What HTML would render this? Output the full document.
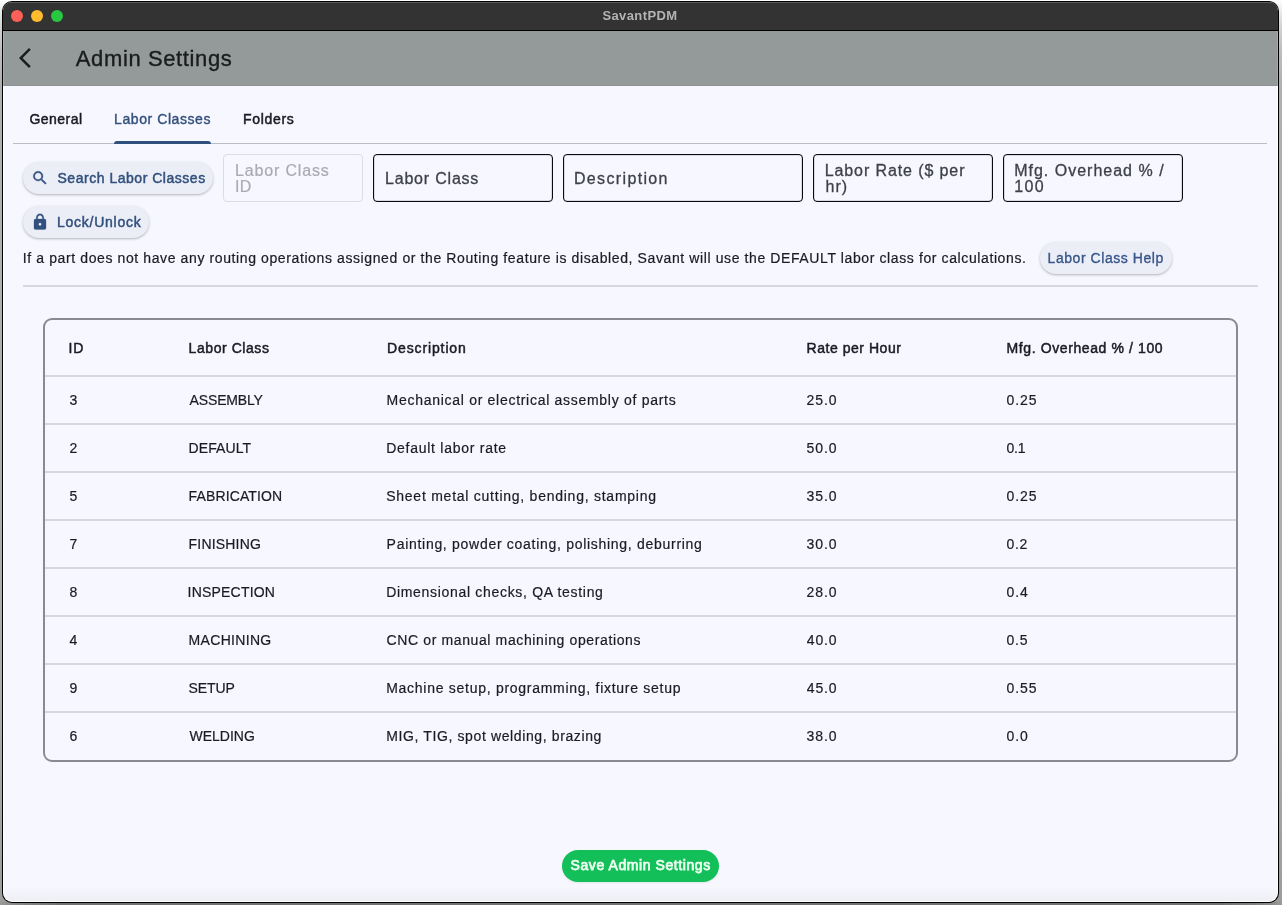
<!DOCTYPE html>
<html lang="en">
<head>
<meta charset="utf-8">
<title>SavantPDM - Admin Settings</title>
<style>
*{box-sizing:border-box;margin:0;padding:0}
html,body{width:1282px;height:905px;overflow:hidden}
body{position:relative;font-family:"Liberation Sans",Arial,sans-serif;color:#1a1c20;
  background:linear-gradient(to bottom,#ffffff 0px,#ececec 10px,#d4d4d4 25px,#bebebe 50px,#b0b0b0 85px,#adadad 700px,#9c9c9c 905px)}
#win{position:absolute;left:2px;top:1px;width:1277px;height:902px;border-radius:10px;background:#000;overflow:hidden}
#inner{position:absolute;left:1px;top:1px;right:1px;bottom:1px;border-radius:9px;background:#fff;overflow:hidden}
#titlebar{position:absolute;left:0;top:0;right:0;height:28px;background:#333333;border-top:1px solid #5a5a5a}
#tbline{position:absolute;left:0;right:0;top:28px;height:1px;background:#000}
.dot{position:absolute;top:7px;width:12px;height:12px;border-radius:50%}
#appbar{position:absolute;left:0;right:0;top:29px;height:55px;background:#949a99;box-shadow:inset 0 -1px 0 rgba(0,0,0,.05),inset 1px 0 0 rgba(255,255,255,.18),inset -1px 0 0 rgba(255,255,255,.18)}
#content{position:absolute;left:1px;right:1px;top:84px;bottom:1px;background:linear-gradient(to bottom,rgba(238,239,244,0) calc(100% - 14px),#eeeff4 100%),#f7f7ff;border-radius:0 0 8px 8px}
.abs{position:absolute}
.t{position:absolute;white-space:pre;line-height:1em;color:#1a1c20;font-weight:400;-webkit-text-stroke:0.2px currentColor}
.b{font-weight:700;-webkit-text-stroke:0}
.m{-webkit-text-stroke:0.48px currentColor}
.sb{-webkit-text-stroke:0.47px currentColor}
.ttl{color:#b4b4b4}
.adm{color:#1a1c1c;-webkit-text-stroke:0.35px currentColor}
.pri{color:#33507c;-webkit-text-stroke:0.38px currentColor}
.btx{color:#31507d}
.wht{color:#ecfff1;-webkit-text-stroke:0.75px currentColor}
.dis{color:#a9abb2}
.fld{color:#3f4149;-webkit-text-stroke:0.3px currentColor}
.hr{position:absolute;height:2px;background:#d6d7e0}
.btn{position:absolute;height:32px;border-radius:16px;background:#eceef7;border:0;
  box-shadow:0 1px 2px rgba(0,0,20,.20),0 1px 3px 1px rgba(0,0,20,.06);font:inherit;display:block}
.btn svg{position:absolute}
.field{position:absolute;top:154px;height:48px;border:1px solid #0a0a10;border-radius:4px;box-shadow:inset 0 0 0 0.5px rgba(10,10,16,.25)}
.field.disabled{border:1px solid #dcdce2;box-shadow:none}
#save{background:#13bf59;box-shadow:0 1px 2px rgba(0,0,20,.08)}
#tbl{position:absolute;left:43px;top:318px;width:1195px;height:444px;border:2px solid #8a8a90;border-radius:9px;overflow:hidden}
#tbl table{border-collapse:collapse;table-layout:fixed;width:1191px}
#tbl th{height:56px;font-weight:400}
#tbl td{height:48px}
#tbl tbody tr{background:linear-gradient(to bottom,#d6d7e0 0,#d6d7e0 1px,transparent 1px,transparent 47px,#d6d7e0 47px)}
#tbl tbody tr:last-child{background:linear-gradient(to bottom,#d6d7e0 0,#d6d7e0 1px,transparent 1px)}
#tbl thead tr{background:linear-gradient(to top,#d6d7e0 0,#d6d7e0 1px,transparent 1px)}
#ind{position:absolute;left:114px;top:140.6px;width:97px;height:3.4px;background:#2f4f7f;border-radius:3px 3px 0 0}
#page{position:absolute;left:0;top:0;width:1282px;height:905px;will-change:transform}
.hlp{color:#38568a;-webkit-text-stroke:0.35px currentColor}
#under{position:absolute;left:0;top:902px;width:1282px;height:3px;background:linear-gradient(to right,#9a9a9a 0,#8a8a8a 12px,#727272 60px,#727272 1222px,#8a8a8a 1270px,#9a9a9a 1282px)}

</style>
</head>
<body>
<div id="page">
<div id="under"></div>
<div id="win"><div id="inner">
  <div id="titlebar">
    <span class="dot" style="left:8px;background:#fe5f57"></span>
    <span class="dot" style="left:28px;background:#febc2e"></span>
    <span class="dot" style="left:48px;background:#28c840"></span>
    <span id="tt" class="t b ttl" style="left:599.40px;top:6.10px;font-size:13px;letter-spacing:0.400px">SavantPDM</span>
  </div>
  <div id="tbline"></div>
  <header id="appbar">
    <svg class="abs" style="left:10px;top:15px" width="24" height="24" viewBox="0 0 24 24"><path fill="#1a1c1c" d="M17.77 3.77L16 2 6 12l10 10 1.77-1.77L9.54 12z"/></svg>
    <h1><span id="adm" class="t adm" style="left:72.80px;top:16.98px;font-size:22px;letter-spacing:0.615px">Admin Settings</span></h1>
  </header>
  <div id="content"></div>
</div></div>

<!-- everything below is positioned in page coordinates -->

<nav>
  <span id="tab1" class="t m" style="left:29.50px;top:112.40px;font-size:14px;letter-spacing:0.453px">General</span><span id="tab2" class="t m pri" style="left:114.10px;top:112.40px;font-size:14px;letter-spacing:0.573px">Labor Classes</span><span id="tab3" class="t m" style="left:243.10px;top:112.40px;font-size:14px;letter-spacing:0.667px">Folders</span>
  <div class="hr" style="left:13px;top:143px;width:1254px;height:1px;background:#bcbcc5"></div>
  <div id="ind"></div>
</nav>

<main>
  <button class="btn" id="search" style="left:23px;top:162px;width:190px">
    <svg style="left:8px;top:7px" width="18" height="18" viewBox="0 0 24 24"><path fill="#31507d" stroke="#31507d" stroke-width="0.45" d="M15.5 14h-.79l-.28-.27A6.471 6.471 0 0 0 16 9.500 6.500 6.500 0 1 0 9.500 16c1.610 0 3.090-.59 4.230-1.570l.27.28v.79l5 4.990L20.490 19l-4.990-5zm-6 0C7.010 14 5 11.990 5 9.500S7.010 5 9.500 5 14 7.010 14 9.500 11.990 14 9.500 14z"/></svg>
    <span id="bsearch" class="t sb btx" style="left:34.50px;top:9.15px;font-size:14px;letter-spacing:0.522px">Search Labor Classes</span>
  </button>
  <div class="field disabled" style="left:223px;width:140px"><span id="f0a" class="t dis" style="left:11.00px;top:8.46px;font-size:16px;letter-spacing:0.848px">Labor Class</span><span id="f0b" class="t dis" style="left:11.00px;top:24.46px;font-size:16px;letter-spacing:0.320px">ID</span></div>
  <div class="field" style="left:373px;width:180px"><span id="f1" class="t fld" style="left:11.00px;top:16.46px;font-size:16px;letter-spacing:0.800px">Labor Class</span></div>
  <div class="field" style="left:563px;width:240px"><span id="f2" class="t fld" style="left:9.90px;top:16.46px;font-size:16px;letter-spacing:1.360px">Description</span></div>
  <div class="field" style="left:813px;width:180px"><span id="f3a" class="t fld" style="left:10.70px;top:8.46px;font-size:16px;letter-spacing:0.900px">Labor Rate ($ per</span><span id="f3b" class="t fld" style="left:11.50px;top:24.46px;font-size:16px;letter-spacing:1.040px">hr)</span></div>
  <div class="field" style="left:1003px;width:180px"><span id="f4a" class="t fld" style="left:10.20px;top:8.46px;font-size:16px;letter-spacing:1.000px">Mfg. Overhead % /</span><span id="f4b" class="t fld" style="left:10.20px;top:24.46px;font-size:16px;letter-spacing:1.440px">100</span></div>

  <button class="btn" id="lock" style="left:23px;top:206px;width:126px">
    <svg style="left:8px;top:7px" width="18" height="18" viewBox="0 0 24 24"><path fill="#31507d" stroke="#31507d" stroke-width="0.4" d="M18 8h-1V6c0-2.760-2.240-5-5-5S7 3.240 7 6v2H6c-1.100 0-2 .9-2 2v10c0 1.100.9 2 2 2h12c1.100 0 2-.9 2-2V10c0-1.100-.9-2-2-2zm-6 9c-1.100 0-2-.9-2-2s.9-2 2-2 2 .9 2 2-.9 2-2 2zm3.100-9H8.900V6c0-1.710 1.390-3.100 3.100-3.100 1.710 0 3.100 1.390 3.100 3.100v2z"/></svg>
    <span id="block" class="t sb btx" style="left:34.00px;top:9.15px;font-size:14px;letter-spacing:0.752px">Lock/Unlock</span>
  </button>

  <p><span id="info" class="t" style="left:22.80px;top:251.35px;font-size:14px;letter-spacing:0.608px">If a part does not have any routing operations assigned or the Routing feature is disabled, Savant will use the DEFAULT labor class for calculations.</span></p>
  <button class="btn" id="help" style="left:1040px;top:242px;width:132px"><span id="bhelp" class="t hlp" style="left:7.60px;top:9.15px;font-size:14px;letter-spacing:0.549px">Labor Class Help</span></button>
  <div class="hr" style="left:23px;top:285px;width:1235px"></div>

  <div id="tbl">
    <table>
      <colgroup><col style="width:119px"><col style="width:199px"><col style="width:420px"><col style="width:200px"><col></colgroup>
      <thead><tr><th><span id="h0" class="t m" style="left:23.50px;top:21.40px;font-size:14px;letter-spacing:0.800px">ID</span></th><th><span id="h1" class="t m" style="left:143.60px;top:21.40px;font-size:14px;letter-spacing:0.560px">Labor Class</span></th><th><span id="h2" class="t m" style="left:342.00px;top:21.40px;font-size:14px;letter-spacing:0.880px">Description</span></th><th><span id="h3" class="t m" style="left:761.60px;top:21.40px;font-size:14px;letter-spacing:0.533px">Rate per Hour</span></th><th><span id="h4" class="t m" style="left:961.60px;top:21.40px;font-size:14px;letter-spacing:0.600px">Mfg. Overhead % / 100</span></th></tr></thead>
      <tbody>
<tr><td><span id="r0c0" class="t" style="left:24.60px;top:73.15px;font-size:14px;letter-spacing:0.250px">3</span></td><td><span id="r0c1" class="t" style="left:144.60px;top:73.15px;font-size:14px;letter-spacing:-0.160px">ASSEMBLY</span></td><td><span id="r0c2" class="t" style="left:341.60px;top:73.15px;font-size:14px;letter-spacing:0.712px">Mechanical or electrical assembly of parts</span></td><td><span id="r0c3" class="t" style="left:761.60px;top:73.15px;font-size:14px;letter-spacing:0.907px">25.0</span></td><td><span id="r0c4" class="t" style="left:961.60px;top:73.15px;font-size:14px;letter-spacing:0.880px">0.25</span></td></tr>
<tr><td><span id="r1c0" class="t" style="left:24.60px;top:121.15px;font-size:14px;letter-spacing:0.250px">2</span></td><td><span id="r1c1" class="t" style="left:143.60px;top:121.15px;font-size:14px;letter-spacing:0.080px">DEFAULT</span></td><td><span id="r1c2" class="t" style="left:341.20px;top:121.15px;font-size:14px;letter-spacing:0.734px">Default labor rate</span></td><td><span id="r1c3" class="t" style="left:761.60px;top:121.15px;font-size:14px;letter-spacing:0.907px">50.0</span></td><td><span id="r1c4" class="t" style="left:961.60px;top:121.15px;font-size:14px;letter-spacing:-0.300px">0.1</span></td></tr>
<tr><td><span id="r2c0" class="t" style="left:24.60px;top:169.15px;font-size:14px;letter-spacing:0.250px">5</span></td><td><span id="r2c1" class="t" style="left:143.60px;top:169.15px;font-size:14px;letter-spacing:0.128px">FABRICATION</span></td><td><span id="r2c2" class="t" style="left:341.20px;top:169.15px;font-size:14px;letter-spacing:0.752px">Sheet metal cutting, bending, stamping</span></td><td><span id="r2c3" class="t" style="left:761.60px;top:169.15px;font-size:14px;letter-spacing:0.907px">35.0</span></td><td><span id="r2c4" class="t" style="left:961.60px;top:169.15px;font-size:14px;letter-spacing:0.880px">0.25</span></td></tr>
<tr><td><span id="r3c0" class="t" style="left:24.60px;top:217.15px;font-size:14px;letter-spacing:0.250px">7</span></td><td><span id="r3c1" class="t" style="left:143.60px;top:217.15px;font-size:14px;letter-spacing:0.180px">FINISHING</span></td><td><span id="r3c2" class="t" style="left:341.60px;top:217.15px;font-size:14px;letter-spacing:0.711px">Painting, powder coating, polishing, deburring</span></td><td><span id="r3c3" class="t" style="left:761.60px;top:217.15px;font-size:14px;letter-spacing:0.907px">30.0</span></td><td><span id="r3c4" class="t" style="left:961.60px;top:217.15px;font-size:14px;letter-spacing:0.560px">0.2</span></td></tr>
<tr><td><span id="r4c0" class="t" style="left:24.60px;top:265.15px;font-size:14px;letter-spacing:0.250px">8</span></td><td><span id="r4c1" class="t" style="left:142.60px;top:265.15px;font-size:14px;letter-spacing:0.196px">INSPECTION</span></td><td><span id="r4c2" class="t" style="left:341.20px;top:265.15px;font-size:14px;letter-spacing:0.684px">Dimensional checks, QA testing</span></td><td><span id="r4c3" class="t" style="left:761.60px;top:265.15px;font-size:14px;letter-spacing:0.907px">28.0</span></td><td><span id="r4c4" class="t" style="left:961.60px;top:265.15px;font-size:14px;letter-spacing:0.920px">0.4</span></td></tr>
<tr><td><span id="r5c0" class="t" style="left:24.60px;top:313.15px;font-size:14px;letter-spacing:0.250px">4</span></td><td><span id="r5c1" class="t" style="left:143.60px;top:313.15px;font-size:14px;letter-spacing:0.320px">MACHINING</span></td><td><span id="r5c2" class="t" style="left:341.60px;top:313.15px;font-size:14px;letter-spacing:0.618px">CNC or manual machining operations</span></td><td><span id="r5c3" class="t" style="left:761.80px;top:313.15px;font-size:14px;letter-spacing:0.827px">40.0</span></td><td><span id="r5c4" class="t" style="left:961.60px;top:313.15px;font-size:14px;letter-spacing:0.680px">0.5</span></td></tr>
<tr><td><span id="r6c0" class="t" style="left:24.60px;top:361.15px;font-size:14px;letter-spacing:0.250px">9</span></td><td><span id="r6c1" class="t" style="left:143.60px;top:361.15px;font-size:14px;letter-spacing:-0.080px">SETUP</span></td><td><span id="r6c2" class="t" style="left:341.20px;top:361.15px;font-size:14px;letter-spacing:0.724px">Machine setup, programming, fixture setup</span></td><td><span id="r6c3" class="t" style="left:761.80px;top:361.15px;font-size:14px;letter-spacing:0.827px">45.0</span></td><td><span id="r6c4" class="t" style="left:961.60px;top:361.15px;font-size:14px;letter-spacing:0.880px">0.55</span></td></tr>
<tr><td><span id="r7c0" class="t" style="left:24.60px;top:409.15px;font-size:14px;letter-spacing:0.250px">6</span></td><td><span id="r7c1" class="t" style="left:144.60px;top:409.15px;font-size:14px;letter-spacing:-0.027px">WELDING</span></td><td><span id="r7c2" class="t" style="left:341.20px;top:409.15px;font-size:14px;letter-spacing:0.619px">MIG, TIG, spot welding, brazing</span></td><td><span id="r7c3" class="t" style="left:761.60px;top:409.15px;font-size:14px;letter-spacing:0.907px">38.0</span></td><td><span id="r7c4" class="t" style="left:961.60px;top:409.15px;font-size:14px;letter-spacing:0.920px">0.0</span></td></tr>
      </tbody>
    </table>
  </div>

  <button class="btn" id="save" style="left:562px;top:850px;width:157px"><span id="bsave" class="t sb wht" style="left:8.60px;top:7.95px;font-size:14px;letter-spacing:0.578px">Save Admin Settings</span></button>
</main>

</div>
</body>
</html>
